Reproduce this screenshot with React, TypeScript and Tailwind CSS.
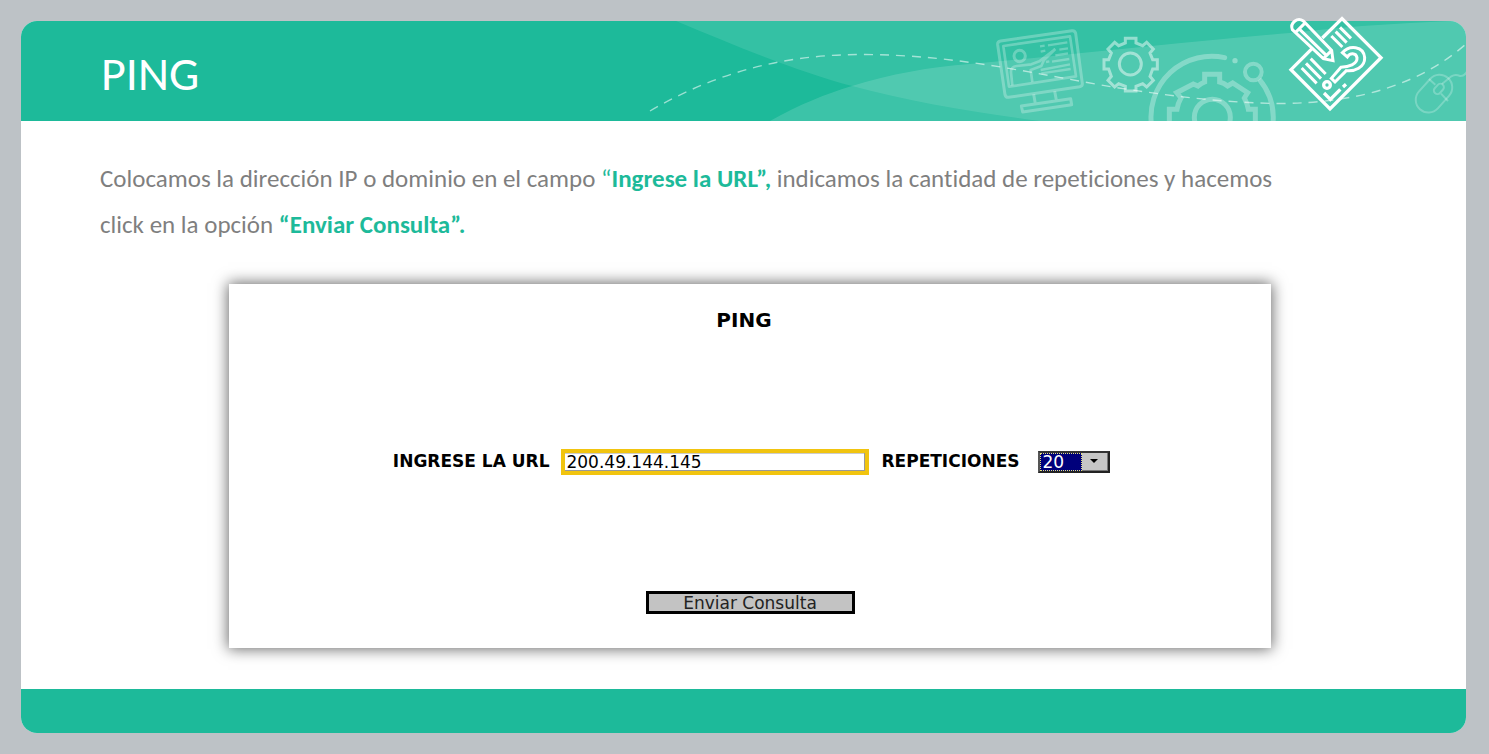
import type { FormEvent } from "react";

const GEAR =
  "M436 85h32v14l20 8 12-10 20 20-10 12 8 20h14v28h-14l-8 22 10 12-20 20-12-10-20 8v14h-32v-14l-20-8-12 10-20-20 10-12-8-22h-14v-28h14l8-20-10-12 20-20 12 10 20-8z";

function HeaderArt() {
  return (
    <svg
      className="absolute inset-y-0 right-0 h-full rounded-tr-2xl"
      viewBox="646 21 820 100"
      preserveAspectRatio="xMaxYMid slice"
      fill="none"
      aria-hidden="true"
    >
      <path d="M676 21C740 48 800 72 852 86C910 102 980 113 1040 121H1466V21Z" fill="#fff" fillOpacity=".1" />
      <path d="M770 121C800 104 826 94 852 86C890 74 930 67 970 64C1080 54 1190 41 1290 33Q1370 24 1450 21H1466V121Z" fill="#fff" fillOpacity=".14" />
      <path
        d="M650 111C720 70 790 54 865 54.500C960 55 1040 75 1113 87C1170 96 1225 103 1280 103.500C1360 103 1420 84 1466 44"
        stroke="#fff"
        strokeOpacity=".55"
        strokeWidth="1.400"
        strokeDasharray="9 7"
      />
      <g transform="translate(980 10) scale(.333333)" stroke="#fff" strokeLinejoin="round">
        <g strokeOpacity=".27" strokeWidth="9">
          <path d="M62 93L276 62Q285 61 287 70L307 220Q308 228 299 230L86 262Q77 263 75 254L53 104Q52 95 62 93Z" />
          <path d="M70 108L270 79L288 199L87 230Z" strokeWidth="8" />
          <circle cx="119" cy="138" r="17" />
          <path d="M97 226L93 187Q92 170 110 168L154 163L178 154L226 117M226 117L192 150L184 168L152 180L157 216" strokeWidth="8" />
          <path d="M204 106L262 97M238 119L264 115M226 136L264 130M216 155L268 147M182 180L270 163M184 190L272 177M180 109L194 107M182 125L196 122M198 156L208 154" strokeWidth="7" />
          <path d="M161 253L166 281M224 244L229 270M124 288L272 266L275 284L128 306Z" />
        </g>
        <g strokeOpacity=".47" strokeWidth="9" strokeLinejoin="miter">
          <path d={GEAR} />
          <circle cx="451" cy="162" r="33" />
        </g>
        <g strokeOpacity=".3" strokeWidth="15">
          <path d="M515 348A182 182 0 0 1 734 143" strokeLinecap="round" />
          <path d="M838 208A182 182 0 0 1 878 348" />
          <circle cx="820" cy="186" r="25" strokeWidth="12" />
          <circle cx="765" cy="152" r="8" fill="#fff" fillOpacity=".35" stroke="none" />
          <circle cx="697" cy="322" r="54" />
          <path
            d="M568 348V298H591Q594 279 603 264L590 248L640 222L654 228Q664 220 674 216V193H719V216Q732 219 743 228L758 219L803 248L793 264Q802 281 805 298H826V348"
            strokeLinejoin="miter"
          />
        </g>
      </g>
      <g transform="translate(1270 5) scale(.333333)" stroke="#fff" strokeOpacity=".24" strokeWidth="6">
        <rect x="454" y="203" width="76" height="126" rx="38" transform="rotate(42 492 266)" />
        <rect x="496" y="235" width="21" height="34" rx="10" transform="rotate(42 507 252)" />
        <path d="M477 222L496 239M513 266L534 288M516 237L544 214Q556 206 570 213Q584 214 592 198" />
      </g>
    </svg>
  );
}

function QuizIcon() {
  return (
    <svg
      className="absolute -top-2 right-[76px] h-[100px] w-[104px]"
      viewBox="48 24 312 300"
      fill="none"
      stroke="#fff"
      strokeWidth="10"
      aria-hidden="true"
    >
      <path d="M157 99L216 41L333 158L180 312L63 194L126 131" />
      <path d="M67 74L160 161L189 167L185 136L100 48A22 22 0 0 0 67 74ZM76 83L107 52M86 70L172 154M160 161L185 136" strokeWidth="9" />
      <path d="M210 67L243 100M197 80L230 113M184 93L217 126M122 161L167 207M108 175L153 221M95 189L140 235" strokeWidth="9" />
      <path d="M217 143C238 119 281 122 284 158C285 188 253 200 229 197L195 231L184 220L213 187C235 186 263 178 261 158C258 143 240 143 232 156Z" strokeWidth="9" />
      <circle cx="171" cy="240" r="10" />
      <path d="M162 264L181 283L211 253M219 246L228 238" />
    </svg>
  );
}

export default function App() {
  const handleSubmit = (event: FormEvent) => event.preventDefault();

  return (
    <div className="flex min-h-screen flex-col bg-[#bdc2c6] py-[21px] pr-[23px] pl-[21px]">
      <div className="flex flex-1 flex-col rounded-2xl bg-white">
        <header className="relative flex h-[100px] items-center rounded-t-2xl bg-[#1dba9a] pl-20">
          <HeaderArt />
          <QuizIcon />
          <h1 className="relative pt-1.5 font-[Carlito,Calibri,'Open_Sans',sans-serif] text-5xl text-white">PING</h1>
        </header>

        <main className="flex-1 pt-[35px] pr-[66px] pb-10 pl-[79px]">
          <p className="max-w-[1200px] font-[Carlito,Calibri,'Open_Sans',sans-serif] text-[25px] leading-[46px] text-[#7f7f7f] [font-variant-ligatures:none]">
            Colocamos la dirección IP o dominio en el campo <span className="text-[#1dba9a]">“</span>
            <strong className="text-[#1dba9a]">Ingrese la URL”,</strong> indicamos la cantidad de repeticiones y hacemos
            click en la opción <strong className="text-[#1dba9a]">“Enviar Consulta”.</strong>
          </p>

          <form
            onSubmit={handleSubmit}
            className="mx-auto mt-9 flex h-[364px] max-w-[1042px] flex-col items-center justify-between bg-white pt-6 pb-[34px] font-['DejaVu_Sans',Verdana,sans-serif] text-black shadow-[0_0_14px_1px_rgba(0,0,0,0.6)]"
          >
            <h2 className="pr-3 text-xl leading-6 font-bold">PING</h2>

            <div className="flex items-center gap-3 pr-3 text-[17px]">
              <label htmlFor="url" className="w-[171px] text-right font-bold">
                INGRESE LA URL
              </label>
              <input
                id="url"
                type="text"
                defaultValue="200.49.144.145"
                className="h-[26px] w-[308px] border-4 border-[#f1c40f] bg-white pl-px leading-4 shadow-[inset_-1px_-1px_0_#999,inset_0_1px_0_#ccc] outline-none"
              />
              <label htmlFor="repeticiones" className="font-bold">
                REPETICIONES
              </label>
              <span className="relative ml-1.5 flex h-[22px] w-[72px] border-2 border-t-[#333] border-r-[#222] border-b-[#222] border-l-[#555] bg-[#c6c6c6]">
                <select
                  id="repeticiones"
                  defaultValue="20"
                  className="w-[42px] appearance-none border border-dotted border-[#e5e27a] bg-[#00007b] pl-0.5 leading-4 text-white outline-none"
                >
                  <option>5</option>
                  <option>10</option>
                  <option>20</option>
                </select>
                <span
                  aria-hidden="true"
                  className="pointer-events-none flex flex-1 items-center justify-center border-r border-b border-[#777] bg-[#c6c6c6]"
                >
                  <svg width="8" height="4" viewBox="0 0 8 4">
                    <path d="M0 0H8L4 4Z" />
                  </svg>
                </span>
              </span>
            </div>

            <button type="submit" className="h-[23px] w-[209px] border-[3px] border-black bg-[#c3c3c3] text-[17px] leading-4 text-[#222]">
              Enviar Consulta
            </button>
          </form>
        </main>

        <footer className="h-11 rounded-b-2xl bg-[#1dba9a]" />
      </div>
    </div>
  );
}
